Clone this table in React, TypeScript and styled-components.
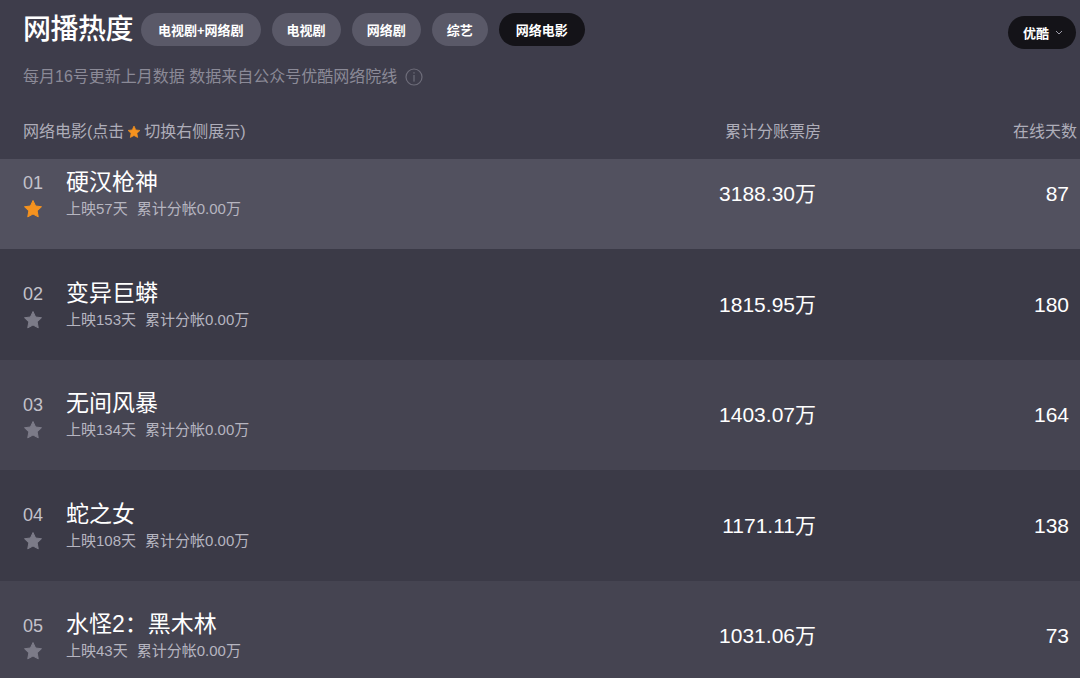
import React from 'react';
import styled, { createGlobalStyle } from 'styled-components';

const GlobalStyle = createGlobalStyle`
  html, body {
    margin: 0;
    padding: 0;
    background: #3e3d4b;
  }
  body {
    font-family: "Liberation Sans", "Noto Sans CJK SC", sans-serif;
    color: #ffffff;
  }
  * { box-sizing: border-box; }
`;

interface Movie {
  rank: string;
  title: string;
  released: number;
  total: string;
  online: number;
}

const movies: Movie[] = [
  { rank: '01', title: '硬汉枪神', released: 57, total: '3188.30万', online: 87 },
  { rank: '02', title: '变异巨蟒', released: 153, total: '1815.95万', online: 180 },
  { rank: '03', title: '无间风暴', released: 134, total: '1403.07万', online: 164 },
  { rank: '04', title: '蛇之女', released: 108, total: '1171.11万', online: 138 },
  { rank: '05', title: '水怪2：黑木林', released: 43, total: '1031.06万', online: 73 },
];

const tabs = ['电视剧+网络剧', '电视剧', '网络剧', '综艺', '网络电影'];

const StarIcon: React.FC<{ size: number; color: string }> = ({ size, color }) => (
  <svg width={size} height={size} viewBox="0 0 24 24">
    <path
      d="M12 1.8l3.1 6.6 7.1.9-5.2 5 1.3 7.1L12 18 5.7 21.4 7 14.3 1.8 9.3l7.1-.9z"
      fill={color}
      stroke={color}
      strokeWidth="1.2"
      strokeLinejoin="round"
    />
  </svg>
);

const App: React.FC = () => {
  return (
    <Page>
      <GlobalStyle />
      <TopBar>
        <Title>网播热度</Title>
        <Tabs>
          {tabs.map((t) => (
            <Tab key={t} $active={t === '网络电影'}>
              {t}
            </Tab>
          ))}
        </Tabs>
        <Platform>
          优酷
          <svg width="8" height="5" viewBox="0 0 8 5">
            <path d="M1 1l3 3 3-3" fill="none" stroke="#9d9ca8" strokeWidth="1" />
          </svg>
        </Platform>
      </TopBar>

      <Note>
        每月16号更新上月数据 数据来自公众号优酷网络院线
        <svg width="18" height="18" viewBox="0 0 18 18">
          <circle cx="9" cy="9" r="8" fill="none" stroke="#6d6c79" strokeWidth="1.2" />
          <rect x="8.4" y="4.2" width="1.2" height="1.4" fill="#6d6c79" />
          <rect x="8.4" y="7" width="1.2" height="6.6" fill="#6d6c79" />
        </svg>
      </Note>

      <HeadRow>
        <HeadCell>
          网络电影(点击
          <StarIcon size={14} color="#f5921e" />
          切换右侧展示)
        </HeadCell>
        <HeadCell $right>累计分账票房</HeadCell>
        <HeadCell $right>在线天数</HeadCell>
      </HeadRow>

      <List>
        {movies.map((m, i) => (
          <Row key={m.rank} $tone={i === 0 ? 'active' : i % 2 === 1 ? 'dark' : 'light'} $cut={i === 0}>
            <NameCell>
              <Rank>{m.rank}</Rank>
              <MovieTitle>{m.title}</MovieTitle>
              <StarSlot>
                <StarIcon size={20} color={i === 0 ? '#f5921e' : '#7c7b88'} />
              </StarSlot>
              <Meta>
                上映{m.released}天<span>累计分帐0.00万</span>
              </Meta>
            </NameCell>
            <Value $pad={5}>{m.total}</Value>
            <Value $pad={8}>{m.online}</Value>
          </Row>
        ))}
      </List>
    </Page>
  );
};

const Page = styled.div`
  width: 1080px;
  height: 678px;
  overflow: hidden;
  background: #3e3d4b;
`;

const TopBar = styled.div`
  display: flex;
  align-items: flex-start;
  padding: 13px 4px 0 23px;
`;

const Title = styled.h1`
  margin: 0 8px 0 0;
  font-size: 28px;
  line-height: 33px;
  font-weight: 500;
  color: #ffffff;
  letter-spacing: -0.5px;
`;

const Tabs = styled.div`
  display: flex;
  gap: 11px;
  flex: 1;
`;

const Tab = styled.div<{ $active?: boolean }>`
  height: 33px;
  padding: 0 15px;
  border-radius: 17px;
  display: flex;
  align-items: center;
  font-size: 13px;
  font-weight: 600;
  color: #ffffff;
  background: ${(p) => (p.$active ? '#141318' : '#5a5968')};

  &:first-child {
    padding: 0 17px;
  }

  &:last-child {
    padding: 0 17px;
  }
`;

const Platform = styled.div`
  margin: 3px 0 -3px;
  height: 33px;
  padding: 0 13px 0 15px;
  border-radius: 17px;
  display: flex;
  align-items: center;
  gap: 6px;
  font-size: 13px;
  font-weight: 600;
  background: #141318;
  color: #ffffff;
`;

const Note = styled.div`
  margin-top: 21px;
  padding-left: 23px;
  display: flex;
  align-items: center;
  gap: 8px;
  font-size: 16px;
  line-height: 20px;
  color: #8b8a97;
`;

const columns = `1fr 160px 256px`;

const HeadRow = styled.div`
  display: grid;
  grid-template-columns: ${columns};
  margin-top: 35px;
  padding: 0 3px 17px 23px;
`;

const HeadCell = styled.div<{ $right?: boolean }>`
  display: flex;
  align-items: center;
  justify-content: ${(p) => (p.$right ? 'flex-end' : 'flex-start')};
  gap: 3px;
  font-size: 16px;
  line-height: 20px;
  color: #aeadb9;
`;

const List = styled.div`
  display: flex;
  flex-direction: column;
`;

const tones = {
  active: '#52515f',
  dark: '#3b3a47',
  light: '#454451',
};

const Row = styled.div<{ $tone: keyof typeof tones; $cut?: boolean }>`
  display: grid;
  grid-template-columns: ${columns};
  align-items: center;
  height: ${(p) => (p.$cut ? 90 : 110.5)}px;
  padding: 0 3px ${(p) => (p.$cut ? 22 : 0)}px 23px;
  flex-shrink: 0;
  background: ${(p) => tones[p.$tone]};
`;

const NameCell = styled.div`
  display: grid;
  grid-template-columns: 43px 1fr;
  grid-template-rows: 27px 27px;
  align-items: center;
  margin-top: 4px;
`;

const Rank = styled.div`
  font-size: 18px;
  line-height: 22px;
  color: #c3c2cb;
  margin-top: 3px;
`;

const MovieTitle = styled.div`
  font-size: 23px;
  line-height: 27px;
  color: #ffffff;
  white-space: nowrap;
  margin-top: 1px;
`;

const StarSlot = styled.div`
  display: flex;
  align-items: center;
`;

const Meta = styled.div`
  font-size: 15px;
  line-height: 20px;
  color: #b6b5c0;
  white-space: nowrap;

  span {
    margin-left: 9px;
  }
`;

const Value = styled.div<{ $pad: number }>`
  text-align: right;
  padding-right: ${(p) => p.$pad}px;
  font-size: 21px;
  line-height: 26px;
  color: #ffffff;
  white-space: nowrap;
  margin-top: 1px;
`;

export default App;
